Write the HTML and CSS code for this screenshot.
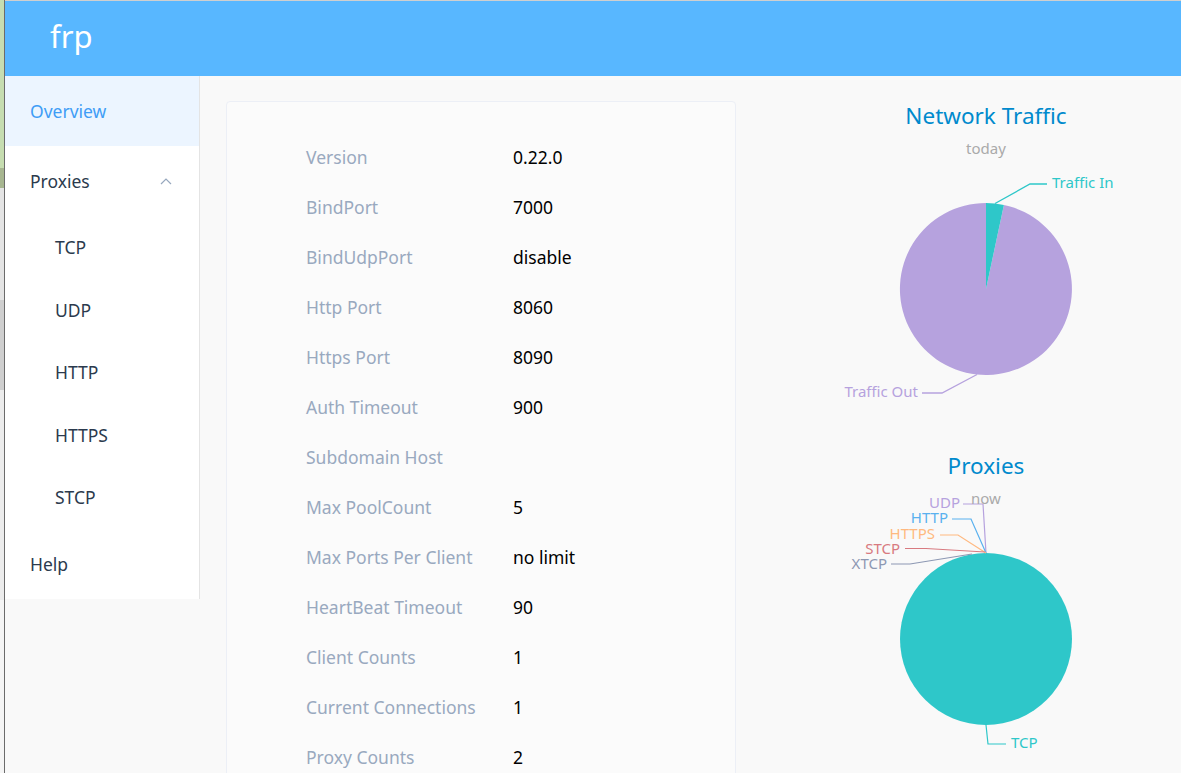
FILE: index.html
```html
<!DOCTYPE html>
<html lang="en">
<head>
<meta charset="utf-8">
<title>frp</title>
<link rel="stylesheet" href="styles.css">
</head>
<body>
<div class="screen">
  <div class="edge"></div>
  <div class="app">
    <header class="topbar"><span class="brand">frp</span></header>
    <div class="body-row">
      <nav class="sidebar">
        <div class="menu-item active">Overview</div>
        <div class="menu-item submenu-title">Proxies
          <svg class="chev" width="12" height="8" viewBox="0 0 12 8"><polyline points="1,7 6,2 11,7" fill="none" stroke="#97a8be" stroke-width="1.2"/></svg>
        </div>
        <div class="sub-item">TCP</div>
        <div class="sub-item">UDP</div>
        <div class="sub-item">HTTP</div>
        <div class="sub-item">HTTPS</div>
        <div class="sub-item">STCP</div>
        <div class="menu-item">Help</div>
      </nav>
      <main class="content">
        <section class="card">
          <div class="row"><span class="label">Version</span><span class="value">0.22.0</span></div>
          <div class="row"><span class="label">BindPort</span><span class="value">7000</span></div>
          <div class="row"><span class="label">BindUdpPort</span><span class="value">disable</span></div>
          <div class="row"><span class="label">Http Port</span><span class="value">8060</span></div>
          <div class="row"><span class="label">Https Port</span><span class="value">8090</span></div>
          <div class="row"><span class="label">Auth Timeout</span><span class="value">900</span></div>
          <div class="row"><span class="label">Subdomain Host</span><span class="value"></span></div>
          <div class="row"><span class="label">Max PoolCount</span><span class="value">5</span></div>
          <div class="row"><span class="label">Max Ports Per Client</span><span class="value">no limit</span></div>
          <div class="row"><span class="label">HeartBeat Timeout</span><span class="value">90</span></div>
          <div class="row"><span class="label">Client Counts</span><span class="value">1</span></div>
          <div class="row"><span class="label">Current Connections</span><span class="value">1</span></div>
          <div class="row"><span class="label">Proxy Counts</span><span class="value">2</span></div>
        </section>
        <aside class="charts">
          <svg class="chart" width="420" height="350" viewBox="0 0 420 350">
            <text class="c-title" x="210" y="23" text-anchor="middle">Network Traffic</text>
            <text class="c-sub" x="210" y="53" text-anchor="middle">today</text>
            <path d="M210,188 L227.9,103.9 A86,86 0 1,1 210,102 Z" fill="#b6a2de"/>
            <path d="M210,188 L210,102 A86,86 0 0,1 227.9,103.9 Z" fill="#2ec7c9"/>
            <polyline points="219,102.5 254,83 271,83" fill="none" stroke="#2ec7c9" stroke-width="1.3"/>
            <text class="c-lbl" x="276" y="87" fill="#2ec7c9">Traffic In</text>
            <polyline points="201,273.5 166,292 146,292" fill="none" stroke="#b6a2de" stroke-width="1.3"/>
            <text class="c-lbl" x="142" y="296" text-anchor="end" fill="#b6a2de">Traffic Out</text>
          </svg>
          <svg class="chart" width="420" height="350" viewBox="0 0 420 350">
            <text class="c-title" x="210" y="23" text-anchor="middle">Proxies</text>
            <circle cx="210" cy="188" r="86" fill="#2ec7c9"/>
            <polyline points="187,53 207,53 210,102" fill="none" stroke="#b6a2de" stroke-width="1.2"/>
            <text class="c-lbl" x="184" y="57" text-anchor="end" fill="#b6a2de">UDP</text>
            <text class="c-sub" x="210" y="53" text-anchor="middle">now</text>
            <polyline points="176,68 195,68 210,102" fill="none" stroke="#5ab1ef" stroke-width="1.2"/>
            <text class="c-lbl" x="172" y="72" text-anchor="end" fill="#5ab1ef">HTTP</text>
            <polyline points="164,84 182,84 210,102" fill="none" stroke="#ffb980" stroke-width="1.2"/>
            <text class="c-lbl" x="159" y="88" text-anchor="end" fill="#ffb980">HTTPS</text>
            <polyline points="129,97.5 150,97.5 209,101" fill="none" stroke="#d87a80" stroke-width="1.2"/>
            <text class="c-lbl" x="124" y="103" text-anchor="end" fill="#d87a80">STCP</text>
            <polyline points="115,113 134,113 196,103" fill="none" stroke="#8d98b3" stroke-width="1.2"/>
            <text class="c-lbl" x="111" y="118" text-anchor="end" fill="#8d98b3">XTCP</text>
            <polyline points="210,274 212,293 230,293" fill="none" stroke="#2ec7c9" stroke-width="1.2"/>
            <text class="c-lbl" x="235" y="297" fill="#2ec7c9">TCP</text>
          </svg>
        </aside>
      </main>
    </div>
  </div>
</div>
</body>
</html>
```

FILE: styles.css
```css
* { box-sizing: border-box; }
html, body { margin: 0; padding: 0; }
body {
  font-family: "Noto Sans", "Open Sans", "Liberation Sans", sans-serif;
  background: #f9f9f9;
  overflow: hidden;
}
.screen {
  display: flex;
  width: 1181px;
  height: 773px;
  overflow: hidden;
}
.edge {
  width: 5px;
  flex: none;
  border-right: 1px solid #6b6b6b;
  background: linear-gradient(to bottom,
    #c6ddb0 0, #c6ddb0 168px,
    #a7b690 168px, #a7b690 188px,
    #e4e4e4 188px, #e4e4e4 300px,
    #cfcfcf 300px, #cfcfcf 390px,
    #ececec 390px, #ececec 600px,
    #f5f5f5 600px);
}
.app {
  flex: 1;
  display: flex;
  flex-direction: column;
  border-top: 1px solid #cfcfcf;
  background: #f9f9f9;
  min-width: 0;
}
.topbar {
  height: 75px;
  flex: none;
  background: #58b7ff;
  display: flex;
  align-items: center;
  padding-left: 45px;
}
.brand {
  color: #fff;
  font-size: 31px;
  line-height: 1;
  margin-top: -4px;
}
.body-row {
  display: flex;
  align-items: flex-start;
  flex: 1;
  min-height: 0;
}
.sidebar {
  width: 195px;
  flex: none;
  background: #fff;
  border-right: 1px solid #e4e4e4;
}
.menu-item {
  height: 70px;
  display: flex;
  align-items: center;
  padding-left: 25px;
  font-size: 17.5px;
  color: #2b3a4d;
  position: relative;
}
.menu-item.active {
  background: #ecf5ff;
  color: #3f9df6;
}
.chev {
  position: absolute;
  left: 155px;
  top: 31px;
}
.sub-item {
  height: 62.5px;
  display: flex;
  align-items: center;
  padding-left: 50px;
  font-size: 17.5px;
  color: #2b3a4d;
}
.content {
  flex: 1;
  display: flex;
  align-items: flex-start;
  padding: 25px 0 0 26px;
}
.card {
  width: 510px;
  flex: none;
  min-height: 720px;
  border: 1px solid #eceff6;
  border-radius: 4px;
  background: #fbfbfb;
  padding: 30px 0 0 79px;
}
.row {
  height: 50px;
  display: flex;
  align-items: center;
  font-size: 17.5px;
}
.label {
  width: 207px;
  flex: none;
  color: #99a9bf;
}
.value {
  color: #000;
}
.charts {
  margin-left: 40px;
  width: 420px;
  flex: none;
  display: flex;
  flex-direction: column;
}
.chart { display: block; }
.c-title {
  font-family: "Noto Sans", "Open Sans", sans-serif;
  font-size: 22.5px;
  fill: #008acd;
}
.c-sub {
  font-family: "Noto Sans", "Open Sans", sans-serif;
  font-size: 15px;
  fill: #aaaaaa;
}
.c-lbl {
  font-family: "Noto Sans", "Open Sans", sans-serif;
  font-size: 15px;
}
```
